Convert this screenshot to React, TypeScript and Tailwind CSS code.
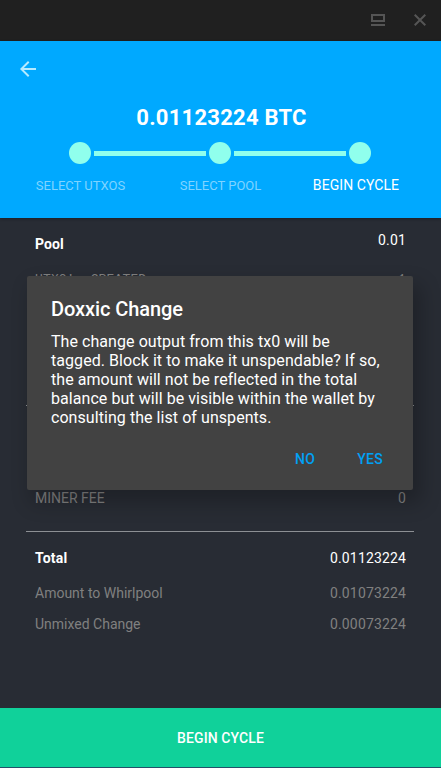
import React from 'react';

const steps = [
  { label: 'SELECT UTXOS', active: false },
  { label: 'SELECT POOL', active: false },
  { label: 'BEGIN CYCLE', active: true },
];

interface RowProps {
  label: string;
  value: string;
}

const DetailRow: React.FC<RowProps> = ({ label, value }) => (
  <div className="flex h-[31px] items-center justify-between pl-[9px] pr-2 text-[14px] text-[#808080]">
    <span>{label}</span>
    <span className="tracking-[0.15px]">{value}</span>
  </div>
);

const WindowBar = () => (
  <div className="flex h-[41px] shrink-0 items-center justify-end gap-[29px] bg-[#202020] pb-px pr-[15px]">
    <svg width="14" height="12" viewBox="0 0 14 12" fill="none" stroke="#555555" strokeWidth="2">
      <path d="M1 1h12v6H1zM0 11h14" />
    </svg>
    <svg width="12" height="12" viewBox="0 0 12 12" fill="none" stroke="#555555" strokeWidth="2">
      <path d="M.7.7l10.6 10.6M11.3.7L.7 11.3" />
    </svg>
  </div>
);

const Header = () => (
  <header className="z-10 flex h-[177px] shrink-0 flex-col bg-[#00a9ff] shadow-[0_1px_3px_rgba(0,0,0,0.3)]">
    <button className="ml-5 mt-5 h-4 w-4" aria-label="Back">
      <svg width="16" height="16" viewBox="4 4 16 16" fill="#b6eaff">
        <path d="M20 11H7.83l5.59-5.59L12 4l-8 8 8 8 1.41-1.41L7.83 13H20v-2z" />
      </svg>
    </button>
    <h1 className="mt-7 pl-[2px] text-center text-[22px] font-bold leading-[26px] tracking-[0.25px] text-white">
      0.01123224 BTC
    </h1>
    <div className="mr-px mt-[11px] flex items-center justify-center gap-[3px]">
      {steps.map((step, i) => (
        <React.Fragment key={step.label}>
          {i > 0 && <div className="mt-px h-[5px] w-[112px] bg-[#90ffed]" />}
          <div className="h-[22px] w-[22px] rounded-full bg-[#90ffed]" />
        </React.Fragment>
      ))}
    </div>
    <div className="mt-3 flex justify-center">
      {steps.map(step => (
        <span
          key={step.label}
          className={`w-[140px] text-center ${
            step.active ? 'pr-[9px] text-[14px] leading-[18px] tracking-[0.08px] text-white' : 'text-[13px] leading-5 text-[#7fd4ff]'
          }`}
        >
          {step.label}
        </span>
      ))}
    </div>
  </header>
);

const Summary = () => (
  <main className="flex flex-1 flex-col bg-[#282c34] pl-[26px] pr-[27px]">
    <div className="mt-3 flex justify-between pl-[9px] pr-2 text-[14px] leading-5 text-white">
      <span className="mt-1 font-bold tracking-[0.1px]">Pool</span>
      <span className="tracking-[0.15px]">0.01</span>
    </div>
    <div className="mt-[18px] flex justify-between pl-[9px] pr-2 font-['Liberation_Mono',monospace] text-[13px] leading-4 tracking-[0.15px] text-[#808080]">
      <span>UTXO's CREATED</span>
      <span>1</span>
    </div>
    <div className="mt-[117px] h-px bg-[#8d9094]" />
    <div className="mt-[77px]">
      <DetailRow label="MINER FEE" value="0" />
    </div>
    <div className="mt-[17px] h-px bg-[#8d9094]" />
    <div className="mt-4 flex justify-between pl-[9px] pr-2 text-[14px] leading-5 text-white">
      <span className="font-bold tracking-[0.2px]">Total</span>
      <span className="tracking-[0.15px]">0.01123224</span>
    </div>
    <div className="mt-[10px]">
      <DetailRow label="Amount to Whirlpool" value="0.01073224" />
      <DetailRow label="Unmixed Change" value="0.00073224" />
    </div>
  </main>
);

const DoxxicDialog = () => (
  <div
    role="dialog"
    className="absolute left-[27px] top-[276px] z-20 flex h-[214px] w-[386px] flex-col rounded-[2px] bg-[#424242] px-6 pt-5 shadow-[6px_11px_20px_2px_rgba(0,0,0,0.24)]"
  >
    <h2 className="text-[20px] font-medium leading-[26px] tracking-[-0.08px] text-white">Doxxic Change</h2>
    <p className="mt-[10px] whitespace-nowrap text-[16px] leading-[19px] tracking-[0.06px] text-white">
      The change output from this tx0 will be
      <br />
      tagged. Block it to make it unspendable? If so,
      <br />
      the amount will not be reflected in the total
      <br />
      balance but will be visible within the wallet by
      <br />
      consulting the list of unspents.
    </p>
    <div className="mt-[22px] flex justify-end gap-[42px] pr-[6px] text-[14px] font-medium leading-5 tracking-[0.3px] text-[#00a0f5]">
      <button>NO</button>
      <button>YES</button>
    </div>
  </div>
);

export default function App() {
  return (
    <div className="relative flex h-[768px] w-[441px] flex-col overflow-hidden bg-[#282c34] font-['Roboto',sans-serif]">
      <WindowBar />
      <Header />
      <Summary />
      <button className="h-[60px] shrink-0 border-b border-[#24506a] bg-[#10d19a] pt-0.5 text-[14px] font-medium tracking-[0.1px] text-white">
        BEGIN CYCLE
      </button>
      <DoxxicDialog />
    </div>
  );
}
